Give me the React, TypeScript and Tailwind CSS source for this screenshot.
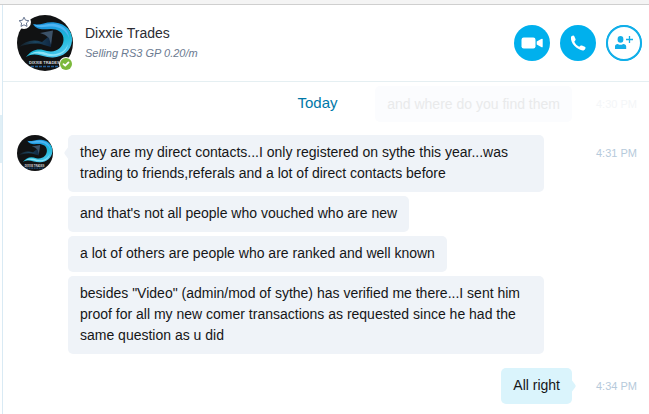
import React from "react";

type Message = { text: string; first?: boolean };

const incoming: Message[] = [
  {
    text: "they are my direct contacts...I only registered on sythe this year...was trading to friends,referals and a lot of direct contacts before",
    first: true,
  },
  { text: "and that's not all people who vouched who are new" },
  { text: "a lot of others are people who are ranked and well known" },
  {
    text: 'besides "Video" (admin/mod of sythe) has verified me there...I sent him proof for all my new comer transactions as requested since he had the same question as u did',
  },
];

function Avatar({ id, className }: { id: string; className: string }) {
  return (
    <svg viewBox="0 0 56 56" className={className} role="img" aria-label="Dixxie Trades">
      <defs>
        <linearGradient id={`${id}-swoosh`} x1="0" y1="0" x2="0.6" y2="1">
          <stop offset="0" stopColor="#1583d0" />
          <stop offset="0.35" stopColor="#1e9ce0" />
          <stop offset="0.7" stopColor="#1cb9d8" />
          <stop offset="1" stopColor="#4cc6ee" />
        </linearGradient>
        <linearGradient id={`${id}-arrow`} x1="0" y1="0" x2="1" y2="0">
          <stop offset="0" stopColor="#141b22" />
          <stop offset="0.5" stopColor="#1b4560" />
          <stop offset="1" stopColor="#10263f" />
        </linearGradient>
        <clipPath id={`${id}-clip`}>
          <circle cx="28" cy="28" r="28" />
        </clipPath>
      </defs>
      <g clipPath={`url(#${id}-clip)`}>
        <rect width="56" height="56" fill="#111213" />
        <path d="M2 32C8 26 16 24 25 27L31 22L35 17L34 32L27 30C19 27 10 29 2 32Z" fill={`url(#${id}-arrow)`} />
        <path d="M23 18L36 15.5L34 30L32 23Q28 19 23 18Z" fill="#3c5268" />
        <path
          d="M16 9C23 11 29 6 38 7.5C49 9 56 16 55 26C54 36 46 42 36 42.5C26 43 19 36 9 42C15 34 22 33 30 36C39 38 46 33 46.500 25C47 17 40 14 34 14C27 14 20 16 16 9Z"
          fill={`url(#${id}-swoosh)`}
        />
        <path d="M17 9.500C25 12 30 7.500 38 9C47 10.500 52 16 52 23C49 15 43 12 35 11.500C28 11.500 21 14 17 9.500Z" fill="#4fb4f2" />
        <path d="M12 40C18 35 25 36 31 38.500C41 41 49 36 51 29C50 37 43 41 35 41C26 41 21 36 12 40Z" fill="#8ce2f5" />
        <text x="12" y="49" fontSize="4" fontWeight="700" fill="#d3d8dc" fontFamily="Liberation Sans, sans-serif">
          DIXXIE TRADES
        </text>
        <path d="M14 51.5H42" stroke="#245f99" strokeWidth="1.5" strokeDasharray="3 1" />
      </g>
    </svg>
  );
}

function StarIcon() {
  return (
    <svg viewBox="0 0 14 14" className="absolute left-0 top-0 size-[14px]" aria-hidden="true">
      <circle cx="7" cy="7" r="7" fill="#fff" />
      <path
        d="M7 2.200L8.500 5.200L11.900 5.700L9.400 8L10 11.400L7 9.800L4 11.400L4.600 8L2.100 5.700L5.500 5.200Z"
        fill="#fff"
        stroke="#667590"
        strokeWidth="1"
        strokeLinejoin="round"
      />
    </svg>
  );
}

function OnlineBadge() {
  return (
    <svg viewBox="0 0 14 14" className="absolute bottom-0 right-0 size-[14px]" role="img" aria-label="Online">
      <circle cx="7" cy="7" r="7" fill="#fff" />
      <circle cx="7" cy="7" r="6" fill="#7cb93c" />
      <path d="M4.500 7.200L6.200 8.700L9.500 5.400" fill="none" stroke="#fff" strokeWidth="1.800" strokeLinecap="round" strokeLinejoin="round" />
    </svg>
  );
}

function VideoIcon() {
  return (
    <svg viewBox="0 0 36 36" className="size-9" fill="#fff" aria-hidden="true">
      <rect x="7.500" y="12.500" width="14" height="11" rx="2.200" />
      <path d="M22.700 16.600L27.200 14Q28.700 13.200 28.700 14.600V21.400Q28.700 22.800 27.200 22L22.700 19.400Z" />
    </svg>
  );
}

function PhoneIcon() {
  return (
    <svg viewBox="0 0 36 36" className="size-9" fill="#fff" aria-hidden="true">
      <path d="M11 12.200C11.200 11.200 12.200 10.600 13.200 10.500C13.800 10.500 14.100 10.800 14.300 11.300L15.500 14C15.800 14.700 15.600 15.100 15.200 15.600L14.300 16.700C15.300 19 17 20.700 19.200 21.700L20.400 20.800C20.800 20.400 21.300 20.300 21.900 20.500L24.800 21.800C25.400 22.100 25.600 22.500 25.500 23C25.300 24.200 24.700 25.100 23.500 25.400C21.300 25.900 17.200 23.800 14.600 21.100C12 18.300 10.500 14.700 11 12.200Z" />
    </svg>
  );
}

function AddPersonIcon() {
  return (
    <svg viewBox="0 0 36 36" className="size-9" fill="#12aee8" aria-hidden="true">
      <circle cx="18" cy="18" r="17" fill="#fff" stroke="#12aee8" strokeWidth="2" />
      <ellipse cx="14.500" cy="14.400" rx="2.900" ry="3.300" />
      <path d="M9 24V21.600C9 19.900 10 19.200 11.800 18.900Q14.500 20.600 17.200 18.900C19 19.200 20.200 19.900 20.200 21.600V24Z" />
      <path d="M23.500 11V18M20 14.500H27" stroke="#12aee8" strokeWidth="1.300" />
    </svg>
  );
}

function CallButton({ label, children }: { label: string; children: React.ReactNode }) {
  return (
    <button type="button" aria-label={label} className="size-9 shrink-0 overflow-hidden rounded-full bg-[#00b0ed]">
      {children}
    </button>
  );
}

function Time({ children }: { children: string }) {
  return <time className="w-10 shrink-0 whitespace-nowrap text-[11px] leading-9 text-[#b6cadb]">{children}</time>;
}

export default function App() {
  return (
    <div className="flex min-h-screen flex-col bg-white font-['Liberation_Sans',Arial,sans-serif]">
      <div className="h-[5px] border-b border-[#cfcfcf] bg-[#f4f4f4]" />
      <div className="flex flex-1">
        <aside className="w-[3px] shrink-0 border-r border-[#d9eaf4] pt-[110px]">
          <div className="h-12 bg-[#e0eff6]" />
        </aside>
        <main className="flex min-w-0 flex-1 flex-col">
          <header className="flex h-[77px] items-center border-b border-[#e5eff2] pl-[14px] pr-[7px]">
            <div className="relative size-14 shrink-0">
              <Avatar id="profile" className="size-14" />
              <StarIcon />
              <OnlineBadge />
            </div>
            <div className="ml-3 min-w-0 flex-1">
              <h1 className="text-[14px] leading-5 text-[#2b2c33]">Dixxie Trades</h1>
              <p className="text-[11px] italic leading-5 text-[#6b7a90]">Selling RS3 GP 0.20/m</p>
            </div>
            <div className="flex gap-[10px]">
              <CallButton label="Video call">
                <VideoIcon />
              </CallButton>
              <CallButton label="Call">
                <PhoneIcon />
              </CallButton>
              <CallButton label="Add people">
                <AddPersonIcon />
              </CallButton>
            </div>
          </header>

          <section className="flex flex-col pb-[10px] pl-[14px] pr-[13px] pt-1">
            <div className="relative mb-[13px] flex justify-end gap-6">
              <h2 className="absolute inset-x-0 top-0 pr-[18px] text-center text-[15px] leading-[34px] text-[#0078a8]">
                Today
              </h2>
              <p className="rounded-[5px] bg-[#fbfcfe] px-3 text-[14px] leading-9 text-[#e9eaeb]">
                and where do you find them
              </p>
              <time className="w-10 whitespace-nowrap text-[11px] leading-9 text-[#f4f6f8]">4:30 PM</time>
            </div>

            <div className="flex items-start">
              <Avatar id="sender" className="size-9 shrink-0" />
              <ul className="ml-[15px] flex min-w-0 flex-1 flex-col items-start gap-1 pr-[52px]">
                {incoming.map((m) => (
                  <li
                    key={m.text}
                    className="relative max-w-[476px] rounded-[5px] bg-[#eff3f8] px-3 pb-2 pt-[7px] text-[14px] leading-[21px] text-[#151617]"
                  >
                    {m.first && (
                      <svg viewBox="0 0 5 14" className="absolute -left-1 top-[11px] h-[14px] w-[5px]" aria-hidden="true">
                        <path d="M5 0L0.600 6Q0 7 0.600 8L5 14Z" fill="#eff3f8" />
                      </svg>
                    )}
                    {m.text}
                  </li>
                ))}
              </ul>
              <Time>4:31 PM</Time>
            </div>

            <div className="mt-[14px] flex justify-end gap-6">
              <p className="relative rounded-[5px] bg-[#daf4fc] px-3 pb-2 pt-[7px] text-[14px] leading-[21px] text-[#151617]">
                All right
                <svg viewBox="0 0 5 14" className="absolute -right-1 top-[11px] h-[14px] w-[5px]" aria-hidden="true">
                  <path d="M0 0L4.400 6Q5 7 4.400 8L0 14Z" fill="#daf4fc" />
                </svg>
              </p>
              <Time>4:34 PM</Time>
            </div>
          </section>
        </main>
      </div>
    </div>
  );
}
